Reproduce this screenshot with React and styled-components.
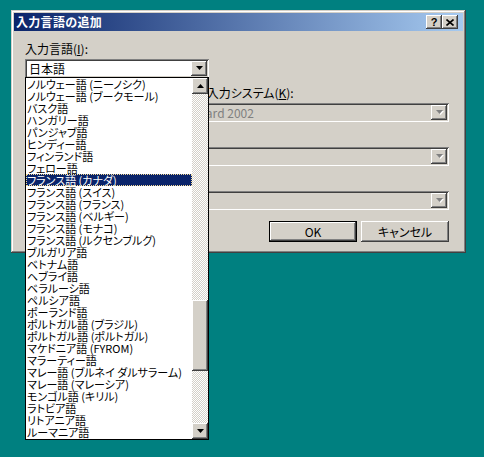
import React from 'react';
import styled, { createGlobalStyle } from 'styled-components';

const face = '#d4d0c8';

const GlobalStyle = createGlobalStyle`
  html, body {
    margin: 0;
    padding: 0;
    background: #008080;
  }
  body {
    font-family: "Noto Sans CJK JP", "Noto Sans", sans-serif;
    font-size: 12px;
    font-feature-settings: "palt";
    color: #000;
  }
`;

const Desktop = styled.div`
  width: 484px;
  height: 457px;
  box-sizing: border-box;
  padding: 10px 0 0 11px;
  overflow: hidden;
`;

const Window = styled.div`
  width: 455px;
  height: 243px;
  box-sizing: border-box;
  padding: 3px;
  background: ${face};
  box-shadow: inset -1px -1px #404040, inset 1px 1px ${face},
    inset -2px -2px #808080, inset 2px 2px #fff;
  display: flex;
  flex-direction: column;
`;

const TitleBar = styled.div`
  height: 18px;
  display: flex;
  align-items: center;
  padding: 0 2px 0 2px;
  background: linear-gradient(to right, #0a246a, #a6caf0);
  color: #fff;
`;

const Title = styled.div`
  flex: 1;
  font-weight: 700;
  font-size: 12px;
  line-height: 18px;
  letter-spacing: 0.3px;
  font-feature-settings: normal;
`;

const raised = `
  background: ${face};
  box-shadow: inset -1px -1px #404040, inset 1px 1px #fff,
    inset -2px -2px #808080, inset 2px 2px ${face};
`;

const CaptionButton = styled.div`
  width: 16px;
  height: 14px;
  box-sizing: border-box;
  ${raised};
  display: flex;
  align-items: center;
  justify-content: center;
  color: #000;
  font-family: "Liberation Sans", sans-serif;
  font-weight: 700;
  font-size: 11px;
  line-height: 14px;
  margin-right: ${(p) => (p.$last ? '3px' : '0')};
`;

const Body = styled.div`
  flex: 1;
  padding: 11px 14px 0 11px;
  display: flex;
  flex-direction: column;
  gap: 8px;
`;

const Field = styled.div`
  position: relative;
  display: flex;
  flex-direction: column;
  gap: 3px;
`;

const Label = styled.div`
  height: 14px;
  line-height: 14px;
  white-space: nowrap;
`;

/* the part of a text that lies under the open list: spread to its width */
const Spread = styled.span`
  letter-spacing: ${(p) => p.$by};
`;

const Combo = styled.div`
  height: 19px;
  width: ${(p) => p.$width || 'auto'};
  box-sizing: border-box;
  padding: 2px;
  display: flex;
  background: ${(p) => (p.$disabled ? face : '#fff')};
  box-shadow: inset 1px 1px #808080, inset -1px -1px #fff,
    inset 2px 2px #404040, inset -2px -2px ${face};
`;

const ComboText = styled.div`
  flex: 1;
  padding-left: 2px;
  line-height: 15px;
  white-space: nowrap;
  overflow: hidden;
  color: ${(p) => (p.$disabled ? '#808080' : '#000')};
`;

const ArrowButton = styled.div`
  width: 16px;
  height: ${(p) => p.$h || 15}px;
  flex: none;
  box-sizing: border-box;
  ${raised};
  display: flex;
  align-items: center;
  justify-content: center;
`;

const Arrow = ({ up, disabled }) => (
  <svg width="7" height="5" viewBox="0 0 7 5" style={{ overflow: 'visible' }}>
    {disabled && <polygon points={up ? '4,2 8,6 0,6' : '1,1 8,1 4.5,5'} fill="#fff" />}
    <polygon
      points={up ? '3.5,0 7,4 0,4' : '0,0 7,0 3.5,4'}
      fill={disabled ? '#808080' : '#000'}
    />
  </svg>
);

const Buttons = styled.div`
  display: flex;
  justify-content: flex-end;
  gap: 4px;
  margin-top: 3px;
`;

const PushButton = styled.div`
  width: 88px;
  height: 21px;
  box-sizing: border-box;
  display: flex;
  align-items: center;
  justify-content: center;
  background: ${face};
  box-shadow: ${(p) =>
    p.$default
      ? `inset 0 0 0 1px #000, inset -2px -2px #404040, inset 2px 2px #fff, inset -3px -3px #808080`
      : `inset -1px -1px #404040, inset 1px 1px #fff, inset -2px -2px #808080`};
  line-height: 21px;
`;

const DropList = styled.div`
  position: absolute;
  left: 0;
  top: 35px;
  width: 184px;
  height: 363px;
  box-sizing: border-box;
  border: 1px solid #000;
  background: #fff;
  display: flex;
  z-index: 5;
`;

const Items = styled.div`
  flex: 1;
  overflow: hidden;
`;

const Item = styled.div`
  height: 12px;
  line-height: 12px;
  font-size: 11px;
  padding-left: 1px;
  white-space: nowrap;
  box-sizing: border-box;
  background: ${(p) => (p.$selected ? '#0a246a' : 'transparent')};
  color: ${(p) => (p.$selected ? '#fff' : '#000')};
  outline: ${(p) => (p.$selected ? '1px dotted #f5db95' : 'none')};
  outline-offset: -1px;
`;

const ScrollBar = styled.div`
  width: 16px;
  display: flex;
  flex-direction: column;
`;

const Track = styled.div`
  flex: 1;
  background-color: #fff;
  background-image: conic-gradient(${face} 25%, #fff 0 50%, ${face} 0 75%, #fff 0);
  background-size: 2px 2px;
`;

const Thumb = styled.div`
  height: 71px;
  margin-top: 206px;
  ${raised};
`;

const languages = [
  'ノルウェー語 (ニーノシク)',
  'ノルウェー語 (ブークモール)',
  'バスク語',
  'ハンガリー語',
  'パンジャブ語',
  'ヒンディー語',
  'フィンランド語',
  'フェロー語',
  'フランス語 (カナダ)',
  'フランス語 (スイス)',
  'フランス語 (フランス)',
  'フランス語 (ベルギー)',
  'フランス語 (モナコ)',
  'フランス語 (ルクセンブルグ)',
  'ブルガリア語',
  'ベトナム語',
  'ヘブライ語',
  'ベラルーシ語',
  'ペルシア語',
  'ポーランド語',
  'ポルトガル語 (ブラジル)',
  'ポルトガル語 (ポルトガル)',
  'マケドニア語 (FYROM)',
  'マラーティー語',
  'マレー語 (ブルネイ ダルサラーム)',
  'マレー語 (マレーシア)',
  'モンゴル語 (キリル)',
  'ラトビア語',
  'リトアニア語',
  'ルーマニア語',
];

const CloseIcon = () => (
  <svg width="8" height="7" viewBox="0 0 8 7">
    <path d="M0.5 0.5 L7.5 6.5 M7.5 0.5 L0.5 6.5" stroke="#000" strokeWidth="1.6" />
  </svg>
);

export default function App() {
  return (
    <>
      <GlobalStyle />
      <Desktop>
        <Window>
          <TitleBar>
            <Title>入力言語の追加</Title>
            <CaptionButton>?</CaptionButton>
            <CaptionButton $last>
              <CloseIcon />
            </CaptionButton>
          </TitleBar>
          <Body>
            <Field>
              <Label>
                入力言語(<u>I</u>):
              </Label>
              <Combo $width="184px">
                <ComboText>日本語</ComboText>
                <ArrowButton>
                  <Arrow />
                </ArrowButton>
              </Combo>
              <DropList>
                <Items>
                  {languages.map((l, i) => (
                    <Item key={l} $selected={i === 8}>
                      {l}
                    </Item>
                  ))}
                </Items>
                <ScrollBar>
                  <ArrowButton $h={16}>
                    <Arrow up />
                  </ArrowButton>
                  <Track>
                    <Thumb />
                  </Track>
                  <ArrowButton $h={16}>
                    <Arrow />
                  </ArrowButton>
                </ScrollBar>
              </DropList>
            </Field>
            <Field>
              <Label>
                <Spread $by="5.5px">キーボード レイアウト/</Spread>入力システム(<u>K</u>):
              </Label>
              <Combo $disabled>
                <ComboText $disabled>
                  <Spread $by="1.2px">日本語 Microsoft IME Stand</Spread>ard 2002
                </ComboText>
                <ArrowButton>
                  <Arrow disabled />
                </ArrowButton>
              </Combo>
            </Field>
            <Field>
              <Label />
              <Combo $disabled>
                <ComboText $disabled />
                <ArrowButton>
                  <Arrow disabled />
                </ArrowButton>
              </Combo>
            </Field>
            <Field>
              <Label />
              <Combo $disabled>
                <ComboText $disabled />
                <ArrowButton>
                  <Arrow disabled />
                </ArrowButton>
              </Combo>
            </Field>
            <Buttons>
              <PushButton $default>OK</PushButton>
              <PushButton>キャンセル</PushButton>
            </Buttons>
          </Body>
        </Window>
      </Desktop>
    </>
  );
}
